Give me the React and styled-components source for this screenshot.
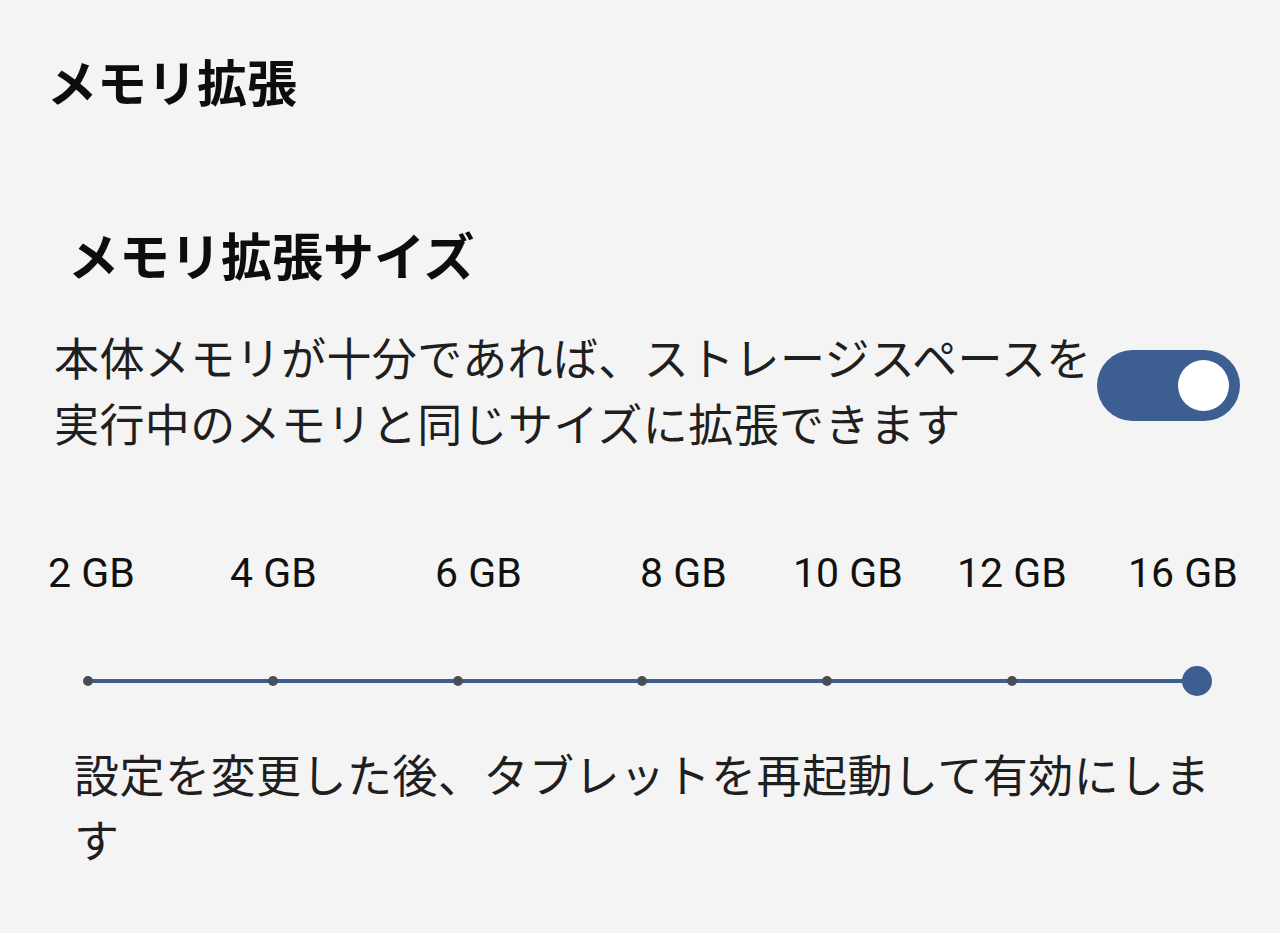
import React from 'react'
import styled, { createGlobalStyle } from 'styled-components'

const GlobalStyle = createGlobalStyle`
  html, body{
    margin: 0;
    padding: 0;
    background: #f4f4f4;
  }
  body{
    font-family: "Noto Sans CJK JP", "Noto Sans", sans-serif;
    color: #1c1c1c;
  }
`;

const blue = '#3c5e91';

const Page = styled.div`
  width: 1280px;
  min-height: 933px;
  box-sizing: border-box;
  padding: 46px 40px 0 0;
  background: #f4f4f4;
`;

const Heading = styled.h1`
  margin: 0;
  padding-left: ${p => p.$indent}px;
  margin-top: ${p => p.$top || 0}px;
  font-size: ${p => p.$size}px;
  line-height: 68px;
  font-weight: 700;
  color: #0d0d0d;
`;

const SettingRow = styled.div`
  display: flex;
  align-items: flex-start;
  justify-content: space-between;
  margin-top: 36px;
  padding-left: 54px;
`;

const Description = styled.p`
  margin: 0;
  width: 1044px;
  font-size: 45px;
  letter-spacing: 0.4px;
  line-height: 66px;
  color: #1f1f1f;
`;

const Toggle = styled.button`
  flex: 0 0 auto;
  width: 143px;
  height: 71px;
  margin-top: 26px;
  padding: 0 11px 0 0;
  border: none;
  border-radius: 36px;
  background: ${blue};
  display: flex;
  align-items: center;
  justify-content: ${p => (p.$on ? 'flex-end' : 'flex-start')};
  span{
    width: 51px;
    height: 51px;
    border-radius: 50%;
    background: #fff;
  }
`;

const Labels = styled.div`
  display: grid;
  grid-template-columns: 182px 205px 205px 153px 164px 171px auto;
  margin-top: 93px;
  padding-left: 48px;
  font-family: Roboto, "Noto Sans", sans-serif;
  font-size: 41px;
  line-height: 48px;
  color: #111;
`;

const Slider = styled.div`
  position: relative;
  display: flex;
  justify-content: space-between;
  align-items: center;
  width: 1139px;
  height: 30px;
  margin: 69px 0 0 73px;
  &::before{
    content: '';
    position: absolute;
    left: 15px;
    right: 15px;
    top: 13px;
    height: 4px;
    background: ${blue};
  }
`;

const Stop = styled.div`
  position: relative;
  width: 30px;
  height: 30px;
  display: flex;
  align-items: center;
  justify-content: center;
  span{
    width: ${p => (p.$thumb ? 30 : 10)}px;
    height: ${p => (p.$thumb ? 30 : 10)}px;
    border-radius: 50%;
    background: ${p => (p.$thumb ? blue : '#484d56')};
  }
`;

const Note = styled.p`
  margin: 45px 0 0;
  padding-left: 74px;
  width: 1160px;
  font-size: 45px;
  letter-spacing: 0.5px;
  line-height: 65px;
  color: #1f1f1f;
`;

const sizes = ['2 GB', '4 GB', '6 GB', '8 GB', '10 GB', '12 GB', '16 GB'];

const App = () => {
  const current = sizes.length - 1;
  return (
    <Page>
      <GlobalStyle />
      <Heading $indent={47} $size={50}>メモリ拡張</Heading>
      <Heading $indent={68} $size={51} $top={106}>メモリ拡張サイズ</Heading>
      <SettingRow>
        <Description>
          本体メモリが十分であれば、ストレージスペースを実行中のメモリと同じサイズに拡張できます
        </Description>
        <Toggle $on aria-label="toggle"><span /></Toggle>
      </SettingRow>
      <Labels>
        {sizes.map(s => <div key={s}>{s}</div>)}
      </Labels>
      <Slider>
        {sizes.map((s, i) => (
          <Stop key={s} $thumb={i === current}><span /></Stop>
        ))}
      </Slider>
      <Note>設定を変更した後、タブレットを再起動して有効にします</Note>
    </Page>
  )
}

export default App
